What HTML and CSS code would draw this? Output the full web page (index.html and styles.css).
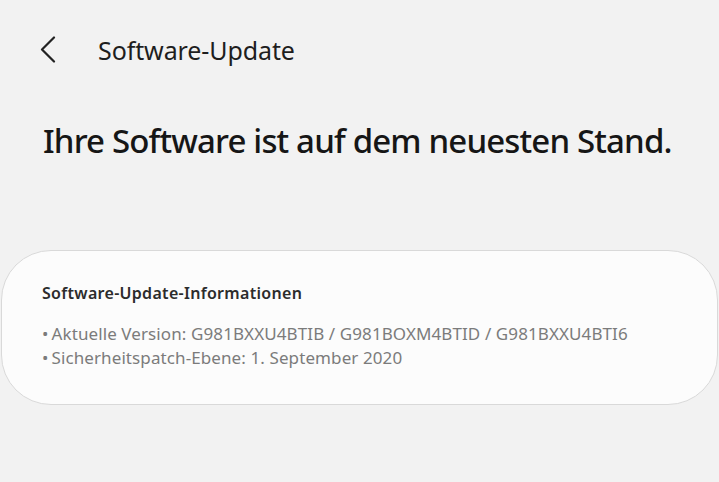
FILE: index.html
```html
<!DOCTYPE html>
<html lang="de">
<head>
<meta charset="utf-8">
<link rel="stylesheet" href="styles.css">
</head>
<body>
<div class="screen">
  <header class="appbar">
    <button class="back" aria-label="Zurück">
      <svg width="18" height="28" viewBox="0 0 18 28"><path d="M15 1.5 L3 13.5 L15 25.5" fill="none" stroke="#222" stroke-width="2.2" stroke-linecap="round" stroke-linejoin="round"/></svg>
    </button>
    <h1 class="title">Software-Update</h1>
  </header>
  <p class="status">Ihre Software ist auf dem neuesten Stand.</p>
  <section class="card">
    <h2 class="card-title">Software-Update-Informationen</h2>
    <ul class="info">
      <li>Aktuelle Version: G981BXXU4BTIB / G981BOXM4BTID / G981BXXU4BTI6</li>
      <li>Sicherheitspatch-Ebene: 1. September 2020</li>
    </ul>
  </section>
</div>
</body>
</html>
```
FILE: styles.css
```css
html, body {
  margin: 0;
  padding: 0;
  background: #f2f2f2;
}
body {
  width: 719px;
  height: 482px;
  overflow: hidden;
  font-family: "Noto Sans", "DejaVu Sans", sans-serif;
  color: #1c1c1c;
}
.screen {
  display: flex;
  flex-direction: column;
  padding: 0 0 0 1px;
}
.appbar {
  display: flex;
  align-items: center;
  height: 50px;
  margin-top: 25px;
}
.back {
  border: 0;
  background: none;
  padding: 0;
  margin-left: 38px;
  width: 18px;
  height: 28px;
  display: flex;
}
.title {
  margin: 0 0 0 41px;
  font-size: 25px;
  font-weight: 400;
  letter-spacing: -0.1px;
  color: #1e1e1e;
}
.status {
  margin: 44px 0 0 42px;
  font-size: 33px;
  font-weight: 500;
  letter-spacing: -0.85px;
  color: #161616;
  line-height: 44px;
}
.card {
  margin: 87px 0 0 0;
  width: 717px;
  height: 155px;
  box-sizing: border-box;
  border: 1px solid #d9d9d9;
  border-radius: 50px;
  background: #fcfcfc;
  padding: 31px 0 0 40px;
}
.card-title {
  margin: 0;
  font-size: 16px;
  font-weight: 600;
  color: #2c2c2c;
  line-height: 22px;
  letter-spacing: 0.3px;
}
.info {
  list-style: none;
  margin: 18px 0 0 0;
  padding: 0;
  font-size: 17px;
  color: #7b7b7b;
  line-height: 24px;
  letter-spacing: 0.1px;
}
.info li::before {
  content: "•";
  margin-right: 3px;
}
```
